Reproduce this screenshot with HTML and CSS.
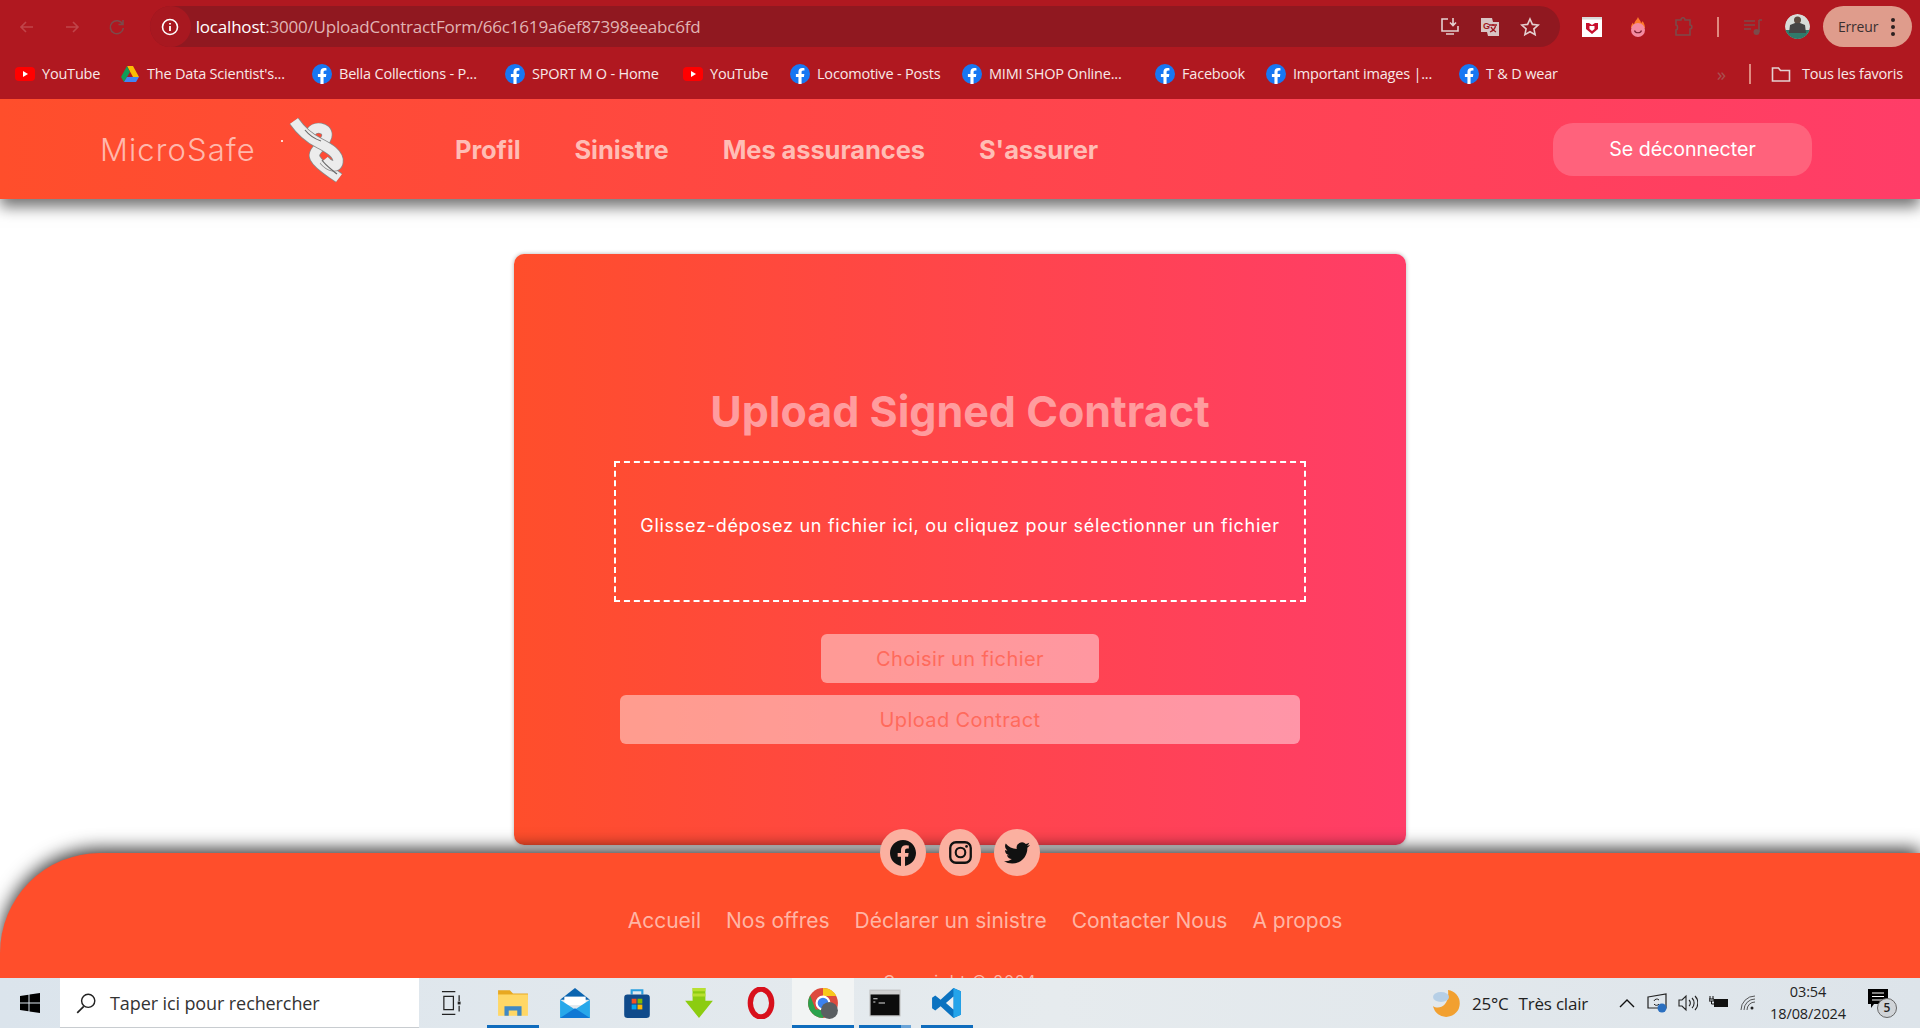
FILE: index.html
```html
<!DOCTYPE html>
<html lang="fr">
<head>
<meta charset="utf-8">
<title>MicroSafe</title>
<link rel="stylesheet" href="styles.css">
</head>
<body>
<svg class="defs" width="0" height="0" aria-hidden="true">
  <symbol id="fb" viewBox="0 0 24 24"><circle cx="12" cy="12" r="12" fill="#1877f2"/><path fill="#fff" d="M16.700 15.500l.5-3.500h-3.300V9.800c0-.95.46-1.870 1.950-1.870h1.510V4.990s-1.370-.24-2.680-.24c-2.740 0-4.530 1.660-4.530 4.670V12H7.080v3.500h3.050V24h3.750v-8.500z"/></symbol>
  <symbol id="yt" viewBox="0 0 20 20"><rect y="3" width="20" height="14" rx="4" fill="#f00"/><path fill="#fff" d="M8 7l5 3-5 3z"/></symbol>
</svg>
<header class="chrome">
  <div class="toolbar">
    <div class="navbtns">
      <svg class="ic" viewBox="0 0 20 20"><path d="M16 10H4M9 5l-5 5 5 5" class="st dim"/></svg>
      <svg class="ic" viewBox="0 0 20 20"><path d="M4 10h12M11 5l5 5-5 5" class="st dim"/></svg>
      <svg class="ic" viewBox="0 0 20 20"><path d="M15.500 7a6.500 6.500 0 1 0 .8 4M16 3v4.500h-4.500" class="st dim2"/></svg>
    </div>
    <div class="omnibox">
      <span class="site"><svg width="20" height="20" viewBox="0 0 20 20"><circle cx="10" cy="10" r="7.500" fill="none" stroke="#fff" stroke-width="1.600"/><path d="M10 9v5M10 6v1.600" stroke="#fff" stroke-width="1.800"/></svg></span>
      <span class="url"><b>localhost</b>:3000/UploadContractForm/66c1619a6ef87398eeabc6fd</span>
      <span class="omni-icons">
        <svg class="ic" viewBox="0 0 20 20"><path d="M8 2H2v12h16V9M6 17h8M13 1v7M10 5.500l3 3 3-3" class="st lite"/></svg>
        <svg class="ic" viewBox="0 0 20 20"><path fill="#d8c4c4" d="M1 1h11l1 4h6v14H8l-1-4H1z"/><path d="M9 8h8M13 7v2M15.500 9c-.6 3-3 5-5.500 6M11 10c.8 2.200 3 4 5 5" stroke="#a01820" stroke-width="1.300" fill="none"/><text x="3" y="12" class="gl">G</text></svg>
        <svg class="ic" viewBox="0 0 20 20"><path d="M10 2l2.400 5.400 5.800.6-4.300 3.900 1.200 5.700L10 14.700l-5.100 2.900 1.200-5.700L1.800 8l5.800-.6z" class="st lite"/></svg>
      </span>
    </div>
    <div class="extensions">
      <svg class="ic pocket" viewBox="0 0 20 20"><rect width="20" height="20" fill="#fff"/><rect width="20" height="2.500" fill="#d8d8d8"/><path fill="#c8102e" d="M4 6h3l3 2 3-2h3v6l-6 5-6-5z"/><path fill="#fff" d="M7.500 9h5v3l-2.500 2-2.500-2z"/></svg>
      <svg class="ic hola" viewBox="0 0 20 20"><path fill="#ff7a2a" d="M10 0c1 3 3 3.500 3 6 1-.5 1.500-1.500 1.500-2C16 6 17 8 17 11H3c0-3 1-4 2-5.500 0 1 .5 1.500 1 2C6.500 4 9 3 10 0z"/><circle cx="10" cy="13" r="7" fill="#f48aa0"/><path d="M6.500 13.500c1 3 6 3 7 0" fill="none" stroke="#7a2030" stroke-width="1.200"/></svg>
      <svg class="ic puzzle" viewBox="0 0 20 20"><path d="M3 3h5c0-3 4-3 4 0h5v5c2.500 0 2.500 4 0 4v6H3v-5c2 0 2-5 0-5z" class="st dim2"/></svg>
      <span class="sep"></span>
      <svg class="ic music" viewBox="0 0 20 20"><path d="M1 4h11M1 8h11M1 12h7" class="st dim2"/><path d="M16 3v12" class="st dim2"/><circle cx="13.500" cy="15" r="3" fill="#7c4a4a"/><path d="M16 3h3" class="st dim2"/></svg>
      <svg class="avatar" viewBox="0 0 25 25"><circle cx="12.500" cy="12.500" r="12.500" fill="#d8dcd8"/><path fill="#2f7a6a" d="M0 16h25v3l-5 6H5l-5-6z"/><circle cx="12.500" cy="6" r="3.500" fill="#5a4a40"/><path fill="#454545" d="M5 11l5-2h5l5 2 1 8H4z"/></svg>
      <span class="error-pill">Erreur<span class="kebab"><i></i><i></i><i></i></span></span>
    </div>
  </div>
  <nav class="bookmarks">
    <a class="bm bm-a"><svg class="fav"><use href="#yt"/></svg>YouTube</a>
    <a class="bm bm-b"><svg class="fav" viewBox="0 0 20 20"><path fill="#fbbc04" d="M7 2h6l6 11h-6z"/><path fill="#0f9d58" d="M7 2l3 6-6 10-3-5z"/><path fill="#4285f4" d="M7 13h12l-3 5H4z"/></svg>The Data Scientist's...</a>
    <a class="bm bm-c"><svg class="fav"><use href="#fb"/></svg>Bella Collections - P...</a>
    <a class="bm bm-d"><svg class="fav"><use href="#fb"/></svg>SPORT M O - Home</a>
    <a class="bm bm-e"><svg class="fav"><use href="#yt"/></svg>YouTube</a>
    <a class="bm bm-f"><svg class="fav"><use href="#fb"/></svg>Locomotive - Posts</a>
    <a class="bm bm-g"><svg class="fav"><use href="#fb"/></svg>MIMI SHOP Online...</a>
    <a class="bm bm-h"><svg class="fav"><use href="#fb"/></svg>Facebook</a>
    <a class="bm bm-i"><svg class="fav"><use href="#fb"/></svg>Important images |...</a>
    <a class="bm bm-j"><svg class="fav"><use href="#fb"/></svg>T &amp; D wear</a>
    <span class="bm-right">
      <span class="more">»</span>
      <span class="sep sep-bm"></span>
      <a class="bm bm-all"><svg class="fav" viewBox="0 0 20 20"><path d="M1.500 4h6l2 2.500h9V17h-17z" class="st lite"/></svg>Tous les favoris</a>
    </span>
  </nav>
</header>

<div class="viewport">
  <div class="site-nav">
    <div class="brand">
      <span class="brand-name">MicroSafe</span>
      <span class="brand-dot"></span>
      <svg class="knot" viewBox="0 0 60 70">
        <path d="M50 64C42 58 30 52 26 44C22 36 38 30 38 21C38 13 26 12 22 18" class="k-edge"/>
        <path d="M50 64C42 58 30 52 26 44C22 36 38 30 38 21C38 13 26 12 22 18" class="k-rope"/>
        <path d="M5 7C12 17 20 24 30 29C40 34 50 40 49 48C48 55 40 52 35 46" class="k-edge"/>
        <path d="M5 7C12 17 20 24 30 29C40 34 50 40 49 48C48 55 40 52 35 46" class="k-rope"/>
        <path d="M33 46C36 51 42 55 48 60M16 16C20 21 26 25 32 27" class="k-line"/>
      </svg>
    </div>
    <div class="nav-links">
      <a>Profil</a><a>Sinistre</a><a>Mes assurances</a><a>S'assurer</a>
    </div>
    <button class="logout">Se déconnecter</button>
  </div>

  <main class="main">
    <section class="card">
      <h1 class="card-title">Upload Signed Contract</h1>
      <div class="dropzone"><p>Glissez-déposez un fichier ici, ou cliquez pour sélectionner un fichier</p></div>
      <button class="btn btn-file">Choisir un fichier</button>
      <button class="btn btn-upload">Upload Contract</button>
    </section>
  </main>

  <footer class="footer">
    <div class="socials">
      <a class="social"><svg viewBox="0 0 24 24"><path d="M24 12.073c0-6.627-5.373-12-12-12s-12 5.373-12 12c0 5.990 4.388 10.954 10.125 11.854v-8.385H7.078v-3.470h3.047V9.430c0-3.007 1.792-4.669 4.533-4.669 1.312 0 2.686.235 2.686.235v2.953H15.830c-1.491 0-1.956.925-1.956 1.874v2.250h3.328l-.532 3.470h-2.796v8.385C19.612 23.027 24 18.062 24 12.073z"/></svg></a>
      <a class="social social-ig"><svg viewBox="0 0 24 24"><rect x="1.300" y="1.300" width="21.400" height="21.400" rx="6" fill="none" stroke="currentColor" stroke-width="2.400"/><circle cx="12" cy="12" r="5" fill="none" stroke="currentColor" stroke-width="2.200"/><circle cx="18.300" cy="5.700" r="1.400"/></svg></a>
      <a class="social"><svg viewBox="0 0 24 24"><path d="M23.953 4.570a10 10 0 01-2.825.775 4.958 4.958 0 002.163-2.723c-.951.555-2.005.959-3.127 1.184a4.920 4.920 0 00-8.384 4.482C7.690 8.095 4.067 6.130 1.640 3.162a4.822 4.822 0 00-.666 2.475c0 1.710.870 3.213 2.188 4.096a4.904 4.904 0 01-2.228-.616v.060a4.923 4.923 0 003.946 4.827 4.996 4.996 0 01-2.212.085 4.936 4.936 0 004.604 3.417 9.867 9.867 0 01-6.102 2.105c-.390 0-.779-.023-1.170-.067a13.995 13.995 0 007.557 2.209c9.053 0 13.998-7.496 13.998-13.985 0-.210 0-.420-.015-.630A9.935 9.935 0 0024 4.590z"/></svg></a>
    </div>
    <div class="foot-links">
      <a>Accueil</a><a>Nos offres</a><a>Déclarer un sinistre</a><a>Contacter Nous</a><a>A propos</a>
    </div>
    <p class="copyright">Copyright © 2024</p>
  </footer>
</div>

<div class="taskbar">
  <svg class="win" viewBox="0 0 20 20"><path fill="#000" d="M0 3l8.500-1.300V9.500H0zM9.500 1.500L20 0v9.500H9.500zM0 10.500h8.500v7.800L0 17zM9.500 10.500H20V20L9.500 18.500z"/></svg>
  <div class="search">
    <svg class="search-ic" viewBox="0 0 20 20"><circle cx="12" cy="8" r="6" fill="none" stroke="#222" stroke-width="1.300"/><path d="M8 13l-6 6" stroke="#222" stroke-width="1.500"/></svg>
    <span>Taper ici pour rechercher</span>
  </div>
  <div class="tasks">
    <span class="task"><svg viewBox="0 0 22 26" class="t-sm"><path d="M1 1h14M1 25h14M3 6h10v14H3zM19 5v6M19 16v6" fill="none" stroke="#222" stroke-width="1.300"/><rect x="17.500" y="11.500" width="3" height="3" fill="#222"/></svg></span>
    <span class="task on"><svg viewBox="0 0 30 30"><path fill="#e8a820" d="M1 3h11l3 3h14v6H1z"/><path fill="#ffd766" d="M1 7h28v20H1z"/><path fill="#3f88c5" d="M7 18h16v9h-4v-5h-8v5H7z"/></svg></span>
    <span class="task"><svg viewBox="0 0 30 30"><path fill="#0a64b0" d="M15 1l14 11H1z"/><path fill="#fff" d="M5 9h20v8H5z"/><path fill="#28a8ea" d="M1 12l14 9 14-9v17H1z"/><path fill="#0f78d4" d="M1 29l14-9 14 9z"/></svg></span>
    <span class="task"><svg viewBox="0 0 30 30"><path d="M10 7V3h10v4" fill="none" stroke="#2aa0e0" stroke-width="2"/><rect x="3" y="7" width="24" height="22" rx="3" fill="#0f4a8a"/><path fill="#f25022" d="M10 11h4.500v4.500H10z"/><path fill="#7fba00" d="M15.500 11H20v4.500h-4.500z"/><path fill="#00a4ef" d="M10 16.500h4.500V21H10z"/><path fill="#ffb900" d="M15.500 16.500H20V21h-4.500z"/></svg></span>
    <span class="task"><svg viewBox="0 0 30 30"><path fill="#8ccc10" d="M9 1h12v12h7L15 29 2 13h7z"/><path fill="#b8e030" d="M9 1h12v3H9zM9 6h12v3H9z"/></svg></span>
    <span class="task"><svg viewBox="0 0 30 30"><ellipse cx="15" cy="15" rx="10" ry="13" fill="none" stroke="#d8101c" stroke-width="5"/></svg></span>
    <span class="task active on"><svg viewBox="0 0 30 30"><circle cx="15" cy="15" r="14" fill="#dd4b3e"/><path fill="#f8c81c" d="M15 1a14 14 0 0 1 12.500 7.500H15z"/><path fill="#2ba24c" d="M1 15a14 14 0 0 0 14 14l3-8H8L3 8a14 14 0 0 0-2 7z"/><circle cx="15" cy="15" r="6" fill="#3c82f0" stroke="#fff" stroke-width="2"/><circle cx="21" cy="22" r="8" fill="#5a5f62"/></svg></span>
    <span class="task on stack"><svg viewBox="0 0 30 30"><rect x="1" y="3" width="28" height="24" fill="#0c0c0c" stroke="#b8b8b8"/><rect x="1" y="3" width="28" height="4" fill="#d0d0d0"/><path d="M4 11h4M4 14h2M9 15h6" stroke="#ddd" stroke-width="1"/></svg></span>
    <span class="task on"><svg viewBox="0 0 30 30"><path fill="#0a72c0" d="M21 1l7 3v22l-7 3-12-11-5 4-3-2V10l3-2 5 4z"/><path fill="#24a4ea" d="M21 1l7 3v22l-7 3z"/><path fill="#edf1f4" d="M21 9l-7 6 7 6z"/></svg></span>
  </div>
  <div class="tray">
    <svg class="weather" viewBox="0 0 28 28"><path fill="#f2a030" d="M16 1a13.500 13.500 0 1 1-15 16c5 4 17 1 15-16z"/><ellipse cx="9" cy="8" rx="8" ry="5" fill="#b6cfe6"/></svg>
    <span class="temp">25°C</span><span class="cond">Très clair</span>
    <svg class="tray-ic caret" viewBox="0 0 16 10"><path d="M1 9l7-7 7 7" fill="none" stroke="#111" stroke-width="1.400"/></svg>
    <svg class="tray-ic" viewBox="0 0 20 20"><path d="M1 4l18-3v14H1z" fill="none" stroke="#222" stroke-width="1.200"/><path d="M7 8a3 3 0 0 1 5-1M12 11a3 3 0 0 1-5 0" fill="none" stroke="#222"/><circle cx="15" cy="15" r="4.500" fill="#2a6fc0"/></svg>
    <svg class="tray-ic" viewBox="0 0 20 20"><path d="M1 7h3l4-4v14l-4-4H1zM11 7a4 4 0 0 1 0 6M14 5a7 7 0 0 1 0 10M17 3a10 10 0 0 1 0 14" fill="none" stroke="#222" stroke-width="1.100"/></svg>
    <svg class="tray-ic" viewBox="0 0 20 20"><rect x="5" y="6" width="14" height="8" fill="#111"/><path d="M1 3v3M4 3v3M0 6h5v2H0zM2.500 8v3h3" stroke="#111" fill="none"/></svg>
    <svg class="tray-ic wifi" viewBox="0 0 16 16"><path d="M1 15A14 14 0 0 1 15 1M4 15A11 11 0 0 1 15 4M7 15a8 8 0 0 1 8-8" fill="none" stroke="#444" stroke-width=".9"/><circle cx="12" cy="13" r="1.500" fill="#222"/></svg>
    <div class="clock"><span>03:54</span><span>18/08/2024</span></div>
    <span class="notif">
      <svg viewBox="0 0 20 20"><path fill="#000" d="M0 0h20v15H6l-3 4v-4H0z"/><path d="M4 4h12M4 7.500h12M4 11h12" stroke="#fff" stroke-width="1.100"/></svg>
      <span class="badge">5</span>
    </span>
  </div>
</div>
</body>
</html>
```

FILE: styles.css
```css
* { box-sizing: border-box; }
html, body { margin: 0; height: 100%; }
body {
  height: 1028px;
  overflow: hidden;
  display: flex;
  flex-direction: column;
  font-family: Inter, "Liberation Sans", sans-serif;
  background: #fff;
}
.defs { position: absolute; }
a { text-decoration: none; color: inherit; }
button { font-family: inherit; border: 0; cursor: pointer; }

/* Browser chrome */
.chrome {
  flex: none;
  height: 99px;
  background: #b01820;
  font-family: "Open Sans", "Noto Sans", sans-serif;
  color: #fff;
}
.toolbar {
  height: 50px;
  padding: 6px 8px 3px 17px;
  display: flex;
  align-items: center;
}
.ic { width: 20px; height: 20px; flex: none; }
.st { fill: none; stroke-width: 1.600; }
.dim { stroke: #c0444a; }
.dim2 { stroke: #7c4a4a; }
.lite { stroke: #e4d0d0; }
.gl { font: 700 9px "Liberation Sans", sans-serif; fill: #a01820; }
.navbtns { display: flex; gap: 25px; width: 133px; }
.omnibox {
  width: 1413px;
  height: 41px;
  border-radius: 21px;
  background: #901820;
  display: flex;
  align-items: center;
}
.site {
  width: 41px;
  height: 41px;
  border-radius: 50%;
  background: #a81820;
  display: flex;
  align-items: center;
  justify-content: center;
  flex: none;
}
.url {
  margin-left: 5px;
  font-size: 17px;
  letter-spacing: -0.200px;
  color: #e0b4b4;
  flex: 1;
}
.url b { font-weight: 400; color: #fff; }
.omni-icons { display: flex; gap: 20px; padding-right: 20px; }
.extensions { display: flex; align-items: center; margin-left: 22px; flex: 1; }
.hola { margin-left: 26px; }
.puzzle { margin-left: 25px; }
.sep { width: 2px; height: 20px; background: #e08a80; margin-left: 24px; flex: none; }
.music { margin-left: 24px; }
.avatar {
  width: 25px;
  height: 25px;
  border-radius: 50%;
  margin-left: 22px;
  flex: none;
}
.error-pill {
  margin-left: 13px;
  width: 89px;
  height: 41px;
  border-radius: 21px;
  background: #df9c8c;
  color: #3a3030;
  font-size: 14px;
  display: flex;
  align-items: center;
  padding-left: 15px;
  letter-spacing: -0.200px;
  flex: none;
}
.kebab { display: flex; flex-direction: column; gap: 3px; margin-left: 13px; }
.kebab i { width: 4px; height: 4px; border-radius: 50%; background: #2c2020; }

.bookmarks {
  height: 49px;
  padding: 0 17px 2px 15px;
  display: flex;
  align-items: center;
  font-size: 14.500px;
  letter-spacing: -0.200px;
  color: #f8e8e8;
}
.bm { display: flex; align-items: center; gap: 7px; white-space: nowrap; }
.fav { width: 20px; height: 20px; flex: none; }
.bm-a { width: 105px; }
.bm-b { width: 192px; }
.bm-c { width: 193px; }
.bm-d { width: 178px; }
.bm-e { width: 107px; }
.bm-f { width: 172px; }
.bm-g { width: 193px; }
.bm-h { width: 111px; }
.bm-i { width: 193px; }
.bm-j { width: 120px; }
.bm-right { margin-left: auto; display: flex; align-items: center; }
.more { color: #a85050; font-size: 19px; margin-right: 23px; }
.sep-bm { margin: 0 20px 0 0; height: 20px; }
.bm-all { gap: 11px; }

/* Page */
.viewport {
  flex: 1;
  min-height: 0;
  overflow: hidden;
  display: flex;
  flex-direction: column;
}
.site-nav {
  flex: none;
  position: relative;
  z-index: 2;
  height: 100px;
  background: linear-gradient(90deg, #ff4e2b, #ff3d68);
  box-shadow: 0 8px 14px rgba(0, 0, 0, .55);
  display: flex;
  align-items: center;
  padding: 0 108px 0 100px;
}
.brand { display: flex; align-items: center; width: 355px; }
.brand-name {
  font-size: 31px;
  font-weight: 300;
  color: #ffb8ac;
  letter-spacing: 1.100px;
}
.brand-dot {
  width: 2px;
  height: 2px;
  margin: -16px 0 0 25px;
  background: #ffd8d0;
  flex: none;
}
.knot { width: 60px; height: 70px; margin-left: 6px; flex: none; }
.k-rope, .k-edge, .k-line { fill: none; }
.k-edge { stroke: #8a8a8a; stroke-width: 11; }
.k-rope { stroke: #ececec; stroke-width: 9.500; }
.k-line { stroke: #6a6a6a; stroke-width: 1.200; }
.nav-links {
  display: flex;
  gap: 54px;
  font-size: 25.500px;
  font-weight: 700;
  letter-spacing: -.1px;
  color: #ffbdb5;
}
.logout {
  margin-left: auto;
  width: 259px;
  height: 53px;
  border-radius: 20px;
  background: #ff627c;
  color: #fff;
  font-size: 19.600px;
  font-weight: 400;
}
.main {
  flex: none;
  padding-top: 55px;
  display: flex;
  justify-content: center;
}
.card {
  width: 892px;
  height: 591px;
  border-radius: 10px;
  background: linear-gradient(90deg, #ff4e2b, #ff3d68);
  display: flex;
  flex-direction: column;
  align-items: center;
  padding-top: 132px;
  box-shadow: 0 0 4px rgba(0, 0, 0, .3);
}
.card-title {
  margin: 0;
  font-size: 43px;
  line-height: 50px;
  font-weight: 700;
  color: #ff9c9e;
}
.dropzone {
  margin-top: 25px;
  width: 692px;
  height: 141px;
  border: 2px dashed #fff;
  display: flex;
  justify-content: center;
  padding-top: 50px;
}
.dropzone p {
  margin: 0;
  font-size: 18px;
  line-height: 26px;
  color: #fff;
  letter-spacing: .72px;
  white-space: nowrap;
}
.btn {
  height: 49px;
  border-radius: 6px;
  background: rgba(255, 255, 255, .45);
  color: #ff6a5c;
  font-size: 20px;
  letter-spacing: .4px;
}
.btn-file { margin-top: 32px; width: 278px; }
.btn-upload { margin-top: 12px; width: 680px; }

.footer {
  flex: none;
  position: relative;
  z-index: 3;
  margin-top: 8px;
  height: 220px;
  background: #ff4e2b;
  border-top-left-radius: 100px;
  box-shadow: 0 -4px 18px rgba(0, 0, 0, .8);
  display: flex;
  flex-direction: column;
  align-items: center;
}
.socials { display: flex; gap: 13px; margin-top: -24px; }
.social {
  width: 46px;
  height: 47px;
  border-radius: 50%;
  background: #fbb0a0;
  color: #111;
  display: flex;
  align-items: center;
  justify-content: center;
}
.social-ig { width: 42px; }
.social svg { width: 26px; height: 26px; fill: currentColor; }
.social-ig svg { width: 23px; height: 23px; }
.foot-links {
  margin-top: 31px;
  padding-left: 50px;
  display: flex;
  gap: 25px;
  font-size: 21px;
  line-height: 28px;
  color: #ffb5a5;
}
.copyright {
  margin: 36px 0 0;
  font-size: 16px;
  letter-spacing: 1px;
  color: #ffb5a5;
}

/* Taskbar */
.taskbar {
  flex: none;
  height: 50px;
  background: linear-gradient(90deg, #dbe4ec, #e6ebee 55%, #dde4ea);
  display: flex;
  align-items: center;
  font-family: "Open Sans", "Noto Sans", sans-serif;
  color: #222;
}
.win { width: 20px; height: 20px; margin: 0 20px; flex: none; }
.search {
  width: 359px;
  height: 50px;
  background: #fff;
  display: flex;
  align-items: center;
  padding-left: 15px;
  font-size: 18px;
  letter-spacing: -.100px;
  gap: 13px;
  border-bottom: 1px solid #c8ccd0;
  flex: none;
  color: #333;
}
.search-ic { width: 22px; height: 22px; }
.tasks { display: flex; align-items: center; height: 50px; margin-left: 1px; }
.task {
  width: 62px;
  height: 50px;
  display: flex;
  align-items: center;
  justify-content: center;
  position: relative;
}
.task svg { width: 32px; height: 32px; }
.task .t-sm { width: 21px; height: 26px; }
.task.on::after {
  content: "";
  position: absolute;
  left: 5px;
  right: 5px;
  bottom: 0;
  height: 3px;
  background: #0f6cbd;
}
.task.stack::after { background: linear-gradient(90deg, #0f6cbd 80%, #6aa4d8 80%); }
.task.active { background: #f2f4f4; }
.task.active::after { left: 0; right: 0; }
.tray { margin-left: auto; display: flex; align-items: center; height: 50px; padding-right: 30px; font-size: 17px; }
.weather { width: 28px; height: 28px; margin-right: 12px; }
.temp { margin-right: 10px; letter-spacing: -.2px; }
.cond { letter-spacing: -.2px; margin-right: 31px; }
.tray-ic { width: 20px; height: 20px; margin-right: 11px; }
.caret { width: 16px; height: 10px; margin-right: 12px; }
.wifi { width: 16px; height: 16px; }
.clock {
  display: flex;
  flex-direction: column;
  align-items: center;
  font-size: 14.500px;
  line-height: 22px;
  margin: 0 22px 0 3px;
  letter-spacing: -.1px;
}
.notif { position: relative; width: 22px; height: 28px; }
.notif svg { width: 20px; height: 20px; display: block; }
.badge {
  position: absolute;
  left: 9px;
  top: 9px;
  width: 20px;
  height: 20px;
  border-radius: 50%;
  border: 1px solid #666;
  background: #d0d4d8;
  font-size: 12px;
  font-weight: 600;
  line-height: 18px;
  text-align: center;
}
```
